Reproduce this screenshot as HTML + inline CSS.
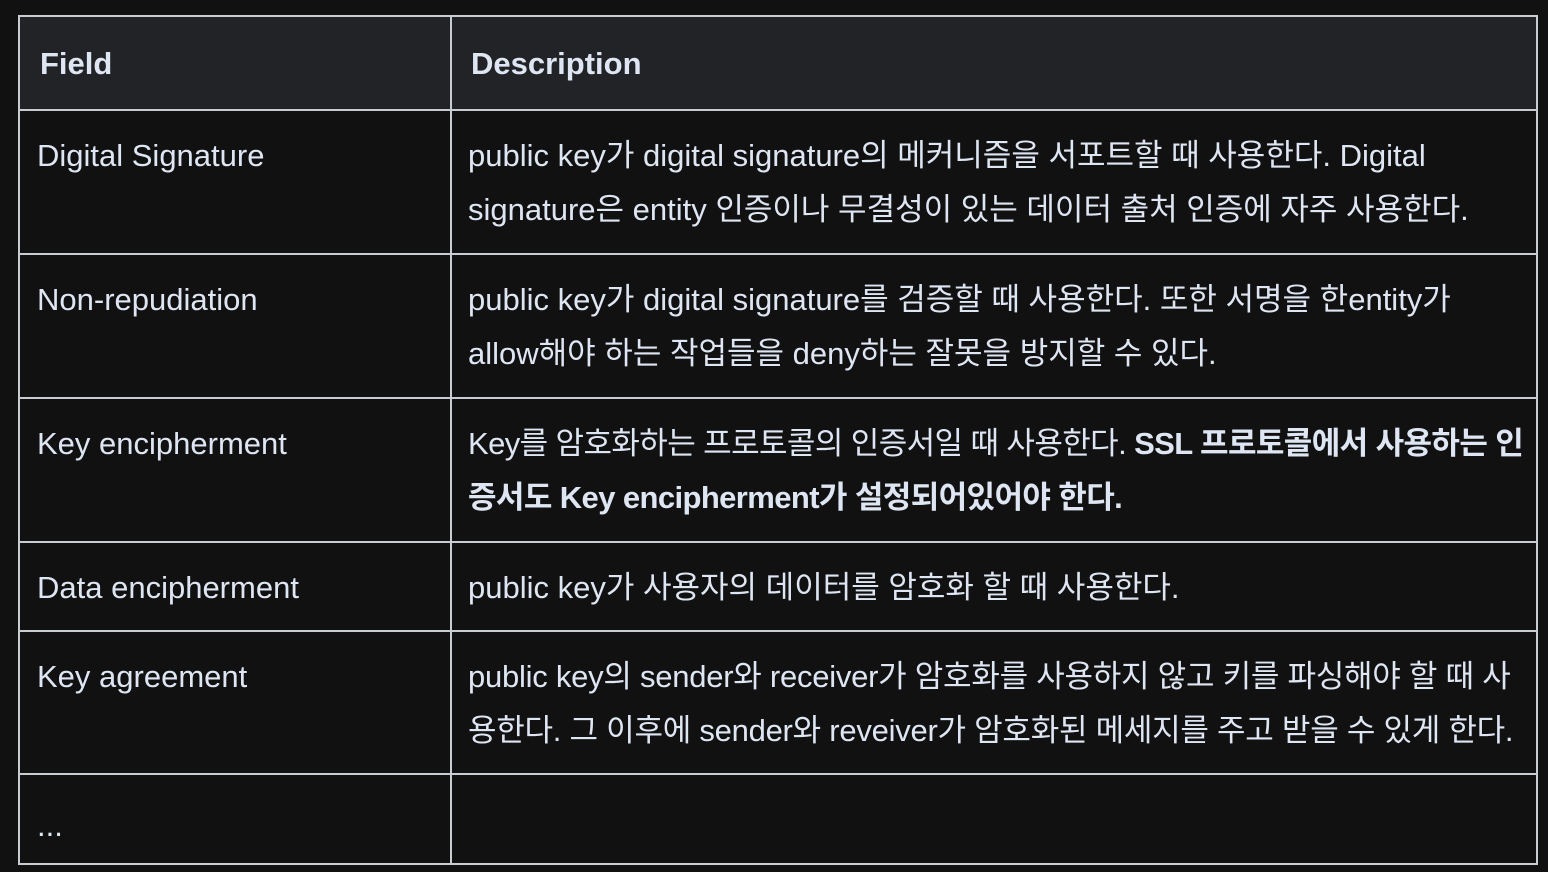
<!DOCTYPE html>
<html><head><meta charset="utf-8"><style>
html,body{margin:0;padding:0;background:#111111;width:1548px;height:872px;overflow:hidden}
body{font-family:"Liberation Sans","Noto Sans CJK KR","NanumGothic",sans-serif;color:#dfe6f3;font-size:31px}
.t{position:absolute;left:18px;top:15px;width:1516px;height:846px;border:2px solid #c9ccd1;box-sizing:content-box}
.hl{position:absolute;left:0;width:1516px;height:2px;background:#c9ccd1}
.vl{position:absolute;left:430px;top:0;width:2px;height:846px;background:#c9ccd1}
.head{position:absolute;left:0;top:0;width:1516px;height:92px;background:#222326}
.c{position:absolute;white-space:nowrap;line-height:54px}
b{font-weight:700}
</style></head><body>
<div class="t">
<div class="head"></div>
<div class="hl" style="top:92px"></div>
<div class="hl" style="top:236px"></div>
<div class="hl" style="top:380px"></div>
<div class="hl" style="top:524px"></div>
<div class="hl" style="top:613px"></div>
<div class="hl" style="top:756px"></div>
<div class="vl"></div>
<div class="c" style="left:20px;top:20px"><b>Field</b></div>
<div class="c" style="left:451px;top:20px"><b>Description</b></div>

<div class="c" style="left:17px;top:112px">Digital Signature</div>
<div class="c" style="left:448px;top:112px">public key가 digital signature의 메커니즘을 서포트할 때 사용한다. Digital<br>signature은 entity 인증이나 무결성이 있는 데이터 출처 인증에 자주 사용한다.</div>

<div class="c" style="left:17px;top:256px">Non-repudiation</div>
<div class="c" style="left:448px;top:256px">public key가 digital signature를 검증할 때 사용한다. 또한 서명을 한entity가<br>allow해야 하는 작업들을 deny하는 잘못을 방지할 수 있다.</div>

<div class="c" style="left:17px;top:400px">Key encipherment</div>
<div class="c" style="left:448px;top:400px;letter-spacing:-0.6px">Key를 암호화하는 프로토콜의 인증서일 때 사용한다. <b>SSL 프로토콜에서 사용하는 인</b><br><b>증서도 Key encipherment가 설정되어있어야 한다.</b></div>

<div class="c" style="left:17px;top:544px">Data encipherment</div>
<div class="c" style="left:448px;top:544px">public key가 사용자의 데이터를 암호화 할 때 사용한다.</div>

<div class="c" style="left:17px;top:633px">Key agreement</div>
<div class="c" style="left:448px;top:633px;letter-spacing:-0.25px">public key의 sender와 receiver가 암호화를 사용하지 않고 키를 파싱해야 할 때 사<br>용한다. 그 이후에 sender와 reveiver가 암호화된 메세지를 주고 받을 수 있게 한다.</div>

<div class="c" style="left:17px;top:782px">...</div>
</div>
</body></html>
